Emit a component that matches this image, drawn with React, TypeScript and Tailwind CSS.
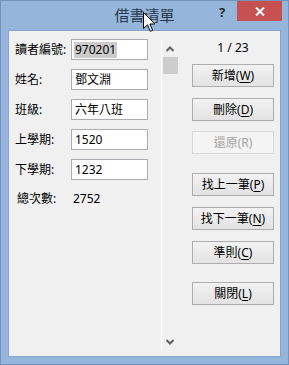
import React from "react";

const font = { fontFamily: '"Noto Sans", "Noto Sans CJK TC", sans-serif' };

function Btn({ label, m, disabled, mt }: { label: string; m: string; disabled?: boolean; mt: string }) {
  return (
    <div
      className={`${mt} w-[82px] h-[23px] flex items-center justify-center text-[12px] leading-none border ${
        disabled
          ? "border-[#d9d9d9] bg-[#f4f4f4] text-[#a3a3a3]"
          : "border-[#adadad] bg-gradient-to-b from-[#f2f2f2] to-[#e3e3e3] text-black"
      }`}
    >
      <span>
        {label}(<span className={disabled ? "" : "underline underline-offset-2"}>{m}</span>)
      </span>
    </div>
  );
}

function Row({ label, value, selected }: { label: string; value: string; selected?: boolean }) {
  return (
    <div className="flex items-center h-[21px]">
      <div className="w-[56px] text-[12px] leading-none text-black">{label}</div>
      <div className="w-[77px] h-[21px] bg-white border border-[#abadb3] flex items-center pl-[2px] text-[12px] leading-none text-black">
        {selected ? <span className="bg-[#cccccc] px-[1px] py-[2px]">{value}</span> : <span className="pl-[1px]">{value}</span>}
      </div>
    </div>
  );
}

export default function App() {
  return (
    <div style={font} className="w-[289px] h-[365px] bg-[#96b5da] border border-[#7393bd] flex flex-col relative overflow-hidden">
      {/* title bar */}
      <div className="relative h-[29px] shrink-0">
        <div className="absolute left-0 right-0 top-[4px] text-center text-[15px] leading-[20px] text-[#2a3a4c] tracking-[0px]">
          借書清單
        </div>
        <div className="absolute left-[218px] top-[3px] text-[13px] font-bold text-[#2b2b2b] leading-[16px]">?</div>
        <div className="absolute left-[236px] top-0 w-[45px] h-[20px] bg-[#c75050] flex items-center justify-center">
          <svg width="10" height="9" viewBox="0 0 10 9">
            <path d="M1 0.5 L9 8.5 M9 0.5 L1 8.5" stroke="white" strokeWidth="2" />
          </svg>
        </div>
      </div>
      {/* client */}
      <div className="mx-[7px] h-[327px] bg-[#f0f0f0] border border-[#86a6cd] flex">
        {/* left */}
        <div className="w-[152px] pt-[8px] pl-[6px] flex flex-col gap-[9px]">
          <Row label="讀者編號:" value="970201" selected />
          <Row label="姓名:" value="鄧文淵" />
          <Row label="班級:" value="六年八班" />
          <Row label="上學期:" value="1520" />
          <Row label="下學期:" value="1232" />
          <div className="flex items-center h-[21px] -mt-[1px]">
            <div className="w-[58px] pl-[2px] text-[12px] leading-none text-black">總次數:</div>
            <div className="text-[12px] leading-none text-black">2752</div>
          </div>
        </div>
        {/* scrollbar */}
        <div className="w-[17px] flex flex-col pt-[9px] pb-[5px]">
          <div className="flex-1 flex">
            <div className="w-[1px] bg-white" />
            <div className="flex-1 flex flex-col items-center">
              <svg width="8" height="6" viewBox="0 0 8 6" className="mt-[6px]">
                <path d="M0.5 5 L4 1.5 L7.5 5" stroke="#606060" strokeWidth="2" fill="none" />
              </svg>
              <div className="mt-[5px] w-[15px] h-[17px] bg-[#cdcdcd]" />
              <div className="flex-1" />
              <svg width="8" height="6" viewBox="0 0 8 6" className="mb-[6px]">
                <path d="M0.5 1 L4 4.5 L7.5 1" stroke="#606060" strokeWidth="2" fill="none" />
              </svg>
            </div>
          </div>
        </div>
        {/* right */}
        <div className="flex-1 pt-[9px] pl-[14px] flex flex-col">
          <div className="w-[82px] h-[16px] text-center text-[12px] leading-[16px] text-black">1 / 23</div>
          <Btn mt="mt-[8px]" label="新增" m="W" />
          <Btn mt="mt-[11px]" label="刪除" m="D" />
          <Btn mt="mt-[10px]" label="還原" m="R" disabled />
          <Btn mt="mt-[19px]" label="找上一筆" m="P" />
          <Btn mt="mt-[11px]" label="找下一筆" m="N" />
          <Btn mt="mt-[11px]" label="準則" m="C" />
          <Btn mt="mt-[18px]" label="關閉" m="L" />
        </div>
      </div>
      {/* mouse cursor */}
      <svg className="absolute left-[142px] top-[11px]" width="13" height="21" viewBox="0 0 13 21">
        <path d="M0.5 0.5 L0.5 16.5 L4.5 12.8 L7.3 19.3 L9.6 18.3 L6.9 12 L12 12 Z" fill="white" stroke="black" strokeWidth="1" />
      </svg>
    </div>
  );
}
